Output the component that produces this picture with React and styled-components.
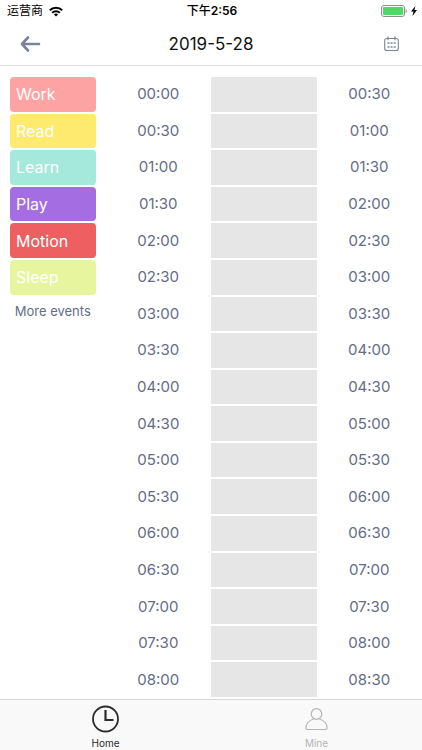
import { useState } from 'react';
import styled, { createGlobalStyle } from 'styled-components';

const SLOT_COUNT = 17;

const events = [
  { name: 'Work', color: '#fea3a3' },
  { name: 'Read', color: '#feea6e' },
  { name: 'Learn', color: '#a5e8dc' },
  { name: 'Play', color: '#a56de2' },
  { name: 'Motion', color: '#ee5f62' },
  { name: 'Sleep', color: '#e7f59e' },
];

const formatTime = (slot) => {
  const hours = String(Math.floor(slot / 2)).padStart(2, '0');
  return `${hours}:${slot % 2 ? '30' : '00'}`;
};

const GlobalStyle = createGlobalStyle`
  * {
    box-sizing: border-box;
  }

  body {
    margin: 0;
    background: #fff;
    font-family: Inter, 'Noto Sans CJK SC', sans-serif;
  }

  button {
    border: none;
    padding: 0;
    background: none;
    font-family: inherit;
    cursor: pointer;
  }
`;

const Page = styled.div`
  display: flex;
  flex-direction: column;
  min-height: 100vh;
`;

const StatusBar = styled.div`
  display: grid;
  grid-template-columns: 1fr auto 1fr;
  align-items: center;
  height: 22px;
  padding: 0 5px 0 7px;
  font-size: 12px;
  line-height: 22px;
  color: #000;
`;

const StatusGroup = styled.div`
  display: flex;
  align-items: center;
  justify-content: ${({ $end }) => ($end ? 'flex-end' : 'flex-start')};
  gap: ${({ $end }) => ($end ? '4px' : '6px')};
`;

const Clock = styled.time`
  font-weight: 600;

  span {
    font-weight: 500;
  }
`;

const Header = styled.header`
  display: flex;
  align-items: center;
  justify-content: space-between;
  height: 44px;
  padding: 0 20px;
  border-bottom: 1px solid #dfdfe1;
`;

const HeaderButton = styled.button`
  display: flex;
  align-items: center;
  justify-content: ${({ $end }) => ($end ? 'flex-end' : 'flex-start')};
  width: 44px;
  height: 42px;
  color: #7b849f;
`;

const Title = styled.h1`
  margin: 0;
  font-size: 17px;
  font-weight: 400;
  color: #111;
`;

const Body = styled.main`
  flex: 1;
  display: grid;
  grid-template-columns: 1fr 3fr;
  padding-top: 11px;
`;

const EventList = styled.aside`
  display: grid;
  grid-template-rows: repeat(${SLOT_COUNT}, minmax(32px, 1fr));
  padding: 0 10px;
`;

const EventButton = styled.button`
  margin-bottom: 2px;
  padding: 0 6px;
  border-radius: 4px;
  background: ${({ $color }) => $color};
  color: #fff;
  font-size: 16px;
  text-align: left;
`;

const MoreLink = styled.a`
  padding-top: 4px;
  font-size: 13px;
  line-height: 20px;
  text-align: center;
  text-decoration: none;
  white-space: nowrap;
  color: #646c87;
`;

const Schedule = styled.ol`
  display: grid;
  grid-template-rows: repeat(${SLOT_COUNT}, minmax(32px, 1fr));
  margin: 0;
  padding: 0;
  list-style: none;
`;

const SlotRow = styled.li`
  display: grid;
  grid-template-columns: repeat(3, 1fr);
  align-items: center;
  padding-bottom: 2px;
`;

const SlotTime = styled.time`
  font-size: 15px;
  line-height: 20px;
  text-align: center;
  color: #646c87;
`;

const Slot = styled.button`
  height: 100%;
  background: #e6e6e6;
`;

const TabBar = styled.nav`
  display: flex;
  height: 51px;
  border-top: 1px solid #d8d8d8;
  background: #f9f9f9;
`;

const Tab = styled.button`
  flex: 1;
  display: flex;
  flex-direction: column;
  align-items: center;
  padding-top: 4px;
  gap: 2px;
  color: ${({ $active }) => ($active ? '#2c2c2c' : '#b5b5b5')};
  font-size: 10px;
  line-height: 14px;
`;

const WifiIcon = () => (
  <svg width="14" height="11" viewBox="0 0 14 11" fill="none" stroke="#000" strokeWidth="2">
    <path d="M.8 4.2a8.8 8.8 0 0 1 12.4 0" />
    <path d="M3.2 6.8a5.4 5.4 0 0 1 7.6 0" />
    <path d="M7 10.6 4.9 8.5a3 3 0 0 1 4.2 0Z" fill="#000" stroke="none" />
  </svg>
);

const BatteryIcon = () => (
  <svg width="27" height="12" viewBox="0 0 27 12">
    <rect x="1.5" y=".5" width="23" height="11" rx="2.5" fill="#fff" stroke="#8e8e8e" />
    <rect x="3" y="2" width="20" height="8" rx="1" fill="#4cd964" />
    <path d="M25.6 4v4c1.6-.6 1.6-3.4 0-4Z" fill="#8e8e8e" />
  </svg>
);

const BoltIcon = () => (
  <svg width="6" height="10" viewBox="0 0 6 10">
    <path d="M4.4 0 0 5.6h2.5L1.5 10 6 4.1H3.4Z" fill="#000" />
  </svg>
);

const BackIcon = () => (
  <svg width="21" height="16" viewBox="0 0 21 16" fill="none" stroke="currentColor" strokeWidth="2.6" strokeLinecap="round" strokeLinejoin="round">
    <path d="M8 1.5 2 8l6 6.5M2.5 8H19" />
  </svg>
);

const CalendarIcon = () => (
  <svg width="20" height="16" viewBox="0 0 20 16" fill="none" stroke="currentColor" strokeLinecap="round">
    <rect x="2.7" y="2.5" width="13.6" height="12" rx="2" strokeWidth="1.1" />
    <path d="M6 .8v3M13 .8v3" strokeWidth="1.2" />
    <path d="M5.5 7h2M8.6 7h2M11.7 7h2M5.5 11h2M8.6 11h2M11.7 11h2" strokeWidth="1.3" strokeLinecap="butt" />
  </svg>
);

const HomeIcon = () => (
  <svg width="30" height="30" viewBox="0 0 30 30" fill="none" stroke="currentColor">
    <circle cx="14.5" cy="15" r="12.5" strokeWidth="1.8" />
    <path d="M14.5 6v10h8" strokeWidth="2.2" />
  </svg>
);

const MineIcon = () => (
  <svg width="30" height="30" viewBox="0 0 30 30" fill="none" stroke="currentColor" strokeWidth="1.2">
    <circle cx="14.5" cy="10" r="5.3" />
    <path d="M11.5 15C7 16.2 4.1 20 3.9 24c0 1 .5 1.5 1.5 1.5h18.2c1 0 1.5-.5 1.5-1.5-.2-4-3.1-7.8-7.6-9" />
  </svg>
);

const tabs = [
  { name: 'Home', Icon: HomeIcon },
  { name: 'Mine', Icon: MineIcon },
];

export default function App() {
  const [activeTab, setActiveTab] = useState('Home');

  return (
    <>
      <GlobalStyle />
      <Page>
        <StatusBar>
          <StatusGroup>
            运营商
            <WifiIcon />
          </StatusGroup>
          <Clock>
            <span>下午</span>2:56
          </Clock>
          <StatusGroup $end>
            <BatteryIcon />
            <BoltIcon />
          </StatusGroup>
        </StatusBar>

        <Header>
          <HeaderButton aria-label="Back">
            <BackIcon />
          </HeaderButton>
          <Title>2019-5-28</Title>
          <HeaderButton $end aria-label="Calendar">
            <CalendarIcon />
          </HeaderButton>
        </Header>

        <Body>
          <EventList>
            {events.map(({ name, color }) => (
              <EventButton key={name} $color={color}>{name}</EventButton>
            ))}
            <MoreLink href="#events">More events</MoreLink>
          </EventList>

          <Schedule>
            {Array.from({ length: SLOT_COUNT }, (_, slot) => (
              <SlotRow key={slot}>
                <SlotTime>{formatTime(slot)}</SlotTime>
                <Slot aria-label={`${formatTime(slot)} to ${formatTime(slot + 1)}`} />
                <SlotTime>{formatTime(slot + 1)}</SlotTime>
              </SlotRow>
            ))}
          </Schedule>
        </Body>

        <TabBar>
          {tabs.map(({ name, Icon }) => (
            <Tab key={name} $active={name === activeTab} onClick={() => setActiveTab(name)}>
              <Icon />
              {name}
            </Tab>
          ))}
        </TabBar>
      </Page>
    </>
  );
}
